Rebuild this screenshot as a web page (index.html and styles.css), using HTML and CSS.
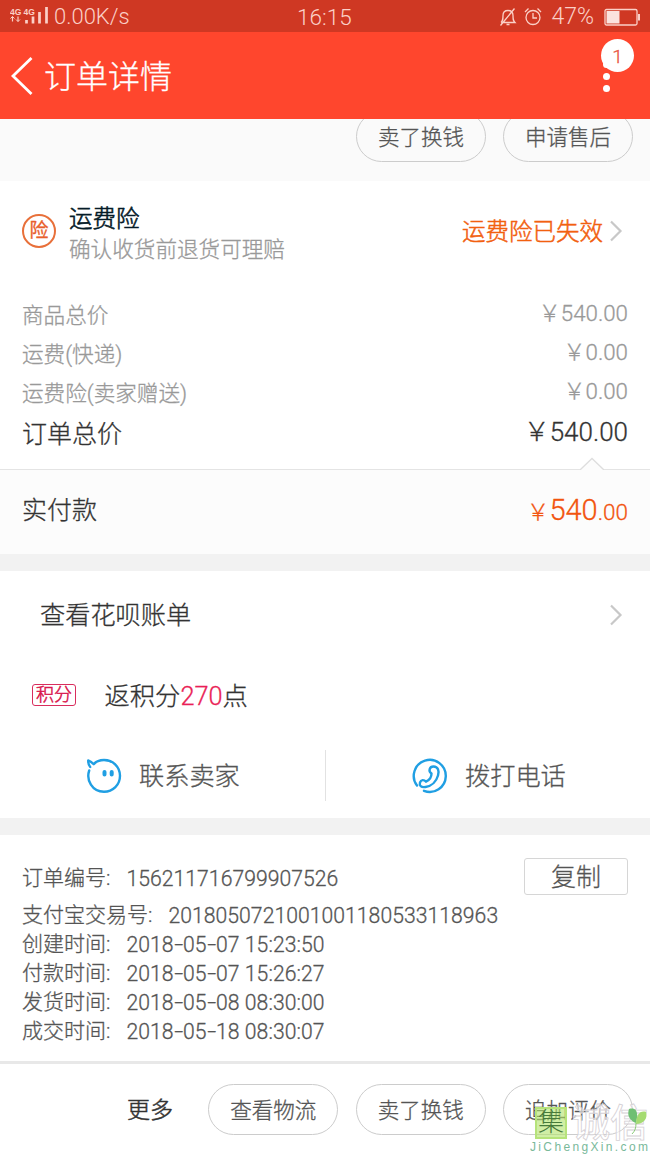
FILE: index.html
```html
<!DOCTYPE html>
<html lang="zh-CN">
<head>
<meta charset="utf-8">
<title>订单详情</title>
<link rel="stylesheet" href="styles.css">
</head>
<body>
<div class="screen">
  <div class="status">
    <svg class="signal" width="40" height="20" viewBox="0 0 40 20">
      <text x="0" y="7.500" class="net">4G</text><text x="13.500" y="7.500" class="net">4G</text>
      <path d="M2.500 9.500v5M8 9.500v5" stroke-width="1.200"/>
      <path d="M.5 11.500l2-2 2 2M6 12.500l2 2 2-2" stroke-width="1"/>
      <path d="M16.500 13v3.500M23 9.500v7M29.500 5v11.500M36.500 0v16.500" stroke-width="2.700"/>
    </svg>
    <span class="speed">0.00K/s</span>
    <span class="clock">16:15</span>
    <div class="status-right">
      <svg width="18" height="20" viewBox="0 0 18 20" class="line"><path d="M2 15.500h14c-2-2-2-3-2-7 0-3-2-5-5-5s-5 2-5 5c0 4 0 5-2 7M7.500 17.500h3M15.500 1.500L1.500 18.500"/></svg>
      <svg width="18" height="20" viewBox="0 0 18 20" class="line"><circle cx="9" cy="10.500" r="7"/><path d="M9 6v5h4M1 5l3.500-3.500M17 5l-3.500-3.500"/></svg>
      <span class="pct">47%</span>
      <svg class="battery" width="37" height="18" viewBox="0 0 37 18"><rect x="1" y="1.500" width="32" height="15.500" rx="1.500" class="line"/><rect x="2.500" y="3" width="13" height="12.500" fill="#fbe3de"/><path d="M35 6v6.500" stroke="#fbd0c7" stroke-width="2"/></svg>
    </div>
  </div>

  <div class="header">
    <svg class="back" width="22" height="40" viewBox="0 0 22 40"><path d="M20.500 2L2 20 20.500 38" fill="none" stroke="#fff" stroke-width="2.800"/></svg>
    <h1>订单详情</h1>
    <div class="menu"><i></i><i></i><i></i><b class="badge">1</b></div>
  </div>

  <div class="goods-actions">
    <span class="pill">卖了换钱</span>
    <span class="pill">申请售后</span>
  </div>

  <div class="insurance">
    <span class="ins-icon">险</span>
    <div class="ins-text"><div class="ins-title">运费险</div><div class="ins-sub">确认收货前退货可理赔</div></div>
    <span class="ins-state">运费险已失效</span>
    <svg class="chev" width="14" height="22" viewBox="0 0 14 22"><path d="M2 1.500L11.500 11 2 20.500"/></svg>
  </div>

  <div class="prices">
    <div class="row"><span>商品总价</span><span>￥540.00</span></div>
    <div class="row"><span>运费(快递)</span><span>￥0.00</span></div>
    <div class="row"><span>运费险(卖家赠送)</span><span>￥0.00</span></div>
    <div class="row total"><span>订单总价</span><span>￥540.00</span></div>
  </div>

  <div class="paid">
    <svg class="notch" width="24" height="13" viewBox="0 0 24 13"><path d="M0 13L12 1.500 24 13" fill="#fcfcfc" stroke="#dedede" stroke-width="1.300"/></svg>
    <span>实付款</span>
    <span class="amount"><small>￥</small>540<small>.00</small></span>
  </div>

  <div class="band"></div>

  <div class="bill">
    <span>查看花呗账单</span>
    <svg class="chev" width="14" height="22" viewBox="0 0 14 22"><path d="M2 1.500L11.500 11 2 20.500"/></svg>
  </div>
  <div class="points"><span class="tag">积分</span><span class="points-text">返积分<em>270</em>点</span></div>
  <div class="contacts">
    <div class="contact">
      <svg width="36" height="36" viewBox="0 0 36 36" class="blue"><path d="M3.200 12.500C0 22 6 33.800 18 33.800c9 0 16-7 16-16S27 2 18 2c-4.500 0-8 1.500-10.300 4.200C6 4.500 4 3 2.200 2.500 2.200 5 2.700 7.500 4.200 9"/><path d="M18.500 14v2.500M25.700 14v2.500" class="eyes"/></svg>
      <span>联系卖家</span>
    </div>
    <div class="contact">
      <svg width="36" height="36" viewBox="0 0 36 36" class="blue"><path d="M5 27.500A16 16 0 1 1 12 32.800"/><path d="M19.500 15.500C16 13 17.500 8.500 21.500 8.500c4.500 0 6 4.500 4.500 9C24.500 23 20 28 13.500 29c-4.500.7-6.500-1.500-5.500-4.500 1-3 4-3 6-.8 3-1.400 5.500-4.700 5.500-8.200z"/></svg>
      <span>拨打电话</span>
    </div>
  </div>

  <div class="band"></div>

  <div class="order">
    <div class="meta first"><span>订单编号:</span><span class="val">156211716799907526</span></div>
    <button class="copy">复制</button>
    <div class="meta"><span>支付宝交易号:</span><span class="val">2018050721001001180533118963</span></div>
    <div class="meta"><span>创建时间:</span><span class="val">2018<i>-</i>05<i>-</i>07 15:23:50</span></div>
    <div class="meta"><span>付款时间:</span><span class="val">2018<i>-</i>05<i>-</i>07 15:26:27</span></div>
    <div class="meta"><span>发货时间:</span><span class="val">2018<i>-</i>05<i>-</i>08 08:30:00</span></div>
    <div class="meta"><span>成交时间:</span><span class="val">2018<i>-</i>05<i>-</i>18 08:30:07</span></div>
  </div>

  <div class="footer">
    <span class="more">更多</span>
    <span class="pill">查看物流</span>
    <span class="pill">卖了换钱</span>
    <span class="pill">追加评价</span>
  </div>

  <div class="watermark">
    <div class="wm-top">
      <span class="wm-box">集</span><span class="wm-name">诚信</span>
      <svg class="leaf" width="20" height="28" viewBox="0 0 20 28"><path d="M1 2c7-2 10 3 7 14C1 13-1 8 1 2z" fill="#6fbf73"/><path d="M8 17C8 8 12 3 18 5c2 6-2 12-10 12z" fill="#a5db72"/><path d="M8 16c0 5-1 8-4 11" fill="none" stroke="#8acb78"/></svg>
    </div>
    <div class="wm-url">JiChengXin.com</div>
  </div>
</div>
</body>
</html>
```

FILE: styles.css
```css
* { box-sizing: border-box; }
body { margin: 0; background: #fff; }
.screen {
  position: relative;
  width: 650px;
  height: 1155px;
  overflow: hidden;
  display: flex;
  flex-direction: column;
  font-family: Roboto, "Noto Sans CJK SC", sans-serif;
  font-weight: 300;
  color: #333;
  white-space: nowrap;
  -webkit-text-stroke: .3px currentColor;
}
.screen > div { flex-shrink: 0; }

.status {
  height: 32px;
  background: #cf3823;
  color: #fbd0c7;
  display: grid;
  grid-template-columns: 44px 243px 78px 1fr;
  align-items: center;
  padding: 2px 9px 0 10px;
  font-size: 22.5px;
  line-height: 30px;
  -webkit-text-stroke-width: 0;
}
.signal { fill: none; stroke: #fbd0c7; }
.net { font: bold 8.5px "Liberation Sans", sans-serif; fill: #fbd0c7; stroke: none; }
.speed { font-size: 22px; }
.status-right { display: flex; align-items: center; justify-content: flex-end; gap: 7px; }
.pct { margin: 0 3px 0 2px; font-size: 23px; }
.line { fill: none; stroke: #fbd0c7; stroke-width: 1.3; }

.header {
  height: 87px;
  background: #ff462d;
  display: flex;
  align-items: center;
  padding: 0 39px 0 11px;
  color: #fff;
}
.header h1 { margin: 3px auto 0 11px; font-size: 32px; font-weight: 300; line-height: 44px; }
.menu { position: relative; width: 10px; margin-top: 1px; display: flex; flex-direction: column; align-items: center; gap: 5px; }
.menu i { width: 7px; height: 7px; border-radius: 50%; background: #fff; }
.badge {
  position: absolute;
  left: 0;
  top: -22px;
  width: 33px;
  height: 33px;
  border-radius: 50%;
  background: #fff;
  color: #e9503c;
  font-weight: 300;
  font-size: 19px;
  line-height: 35px;
  text-align: center;
}

.pill {
  width: 130px;
  height: 51px;
  border: 1px solid #ccc;
  border-radius: 26px;
  font-size: 21.5px;
  line-height: 51px;
  text-align: center;
  color: #555;
}
.goods-actions {
  height: 62px;
  background: #fafafa;
  display: flex;
  justify-content: flex-end;
  align-items: flex-end;
  gap: 17px;
  padding: 0 17px 19px;
  overflow: hidden;
}

.insurance { height: 114px; padding: 0 27px 14px 22px; display: flex; align-items: center; }
.ins-icon {
  width: 34px;
  height: 34px;
  border: 2px solid #e8703a;
  border-radius: 50%;
  color: #e8602c;
  font-size: 19px;
  font-weight: 400;
  line-height: 30px;
  text-align: center;
}
.ins-text { margin: 5px auto 0 13px; }
.ins-title { font-size: 23.5px; line-height: 32px; color: #051b28; -webkit-text-stroke-width: .6px; }
.ins-sub { font-size: 21.6px; line-height: 30px; color: #999; }
.ins-state { margin-top: 2px; font-size: 23.5px; color: #f2600f; line-height: 34px; -webkit-text-stroke-width: .5px; }
.chev { fill: none; stroke: #c8c8c8; stroke-width: 2.2; }
.insurance .chev { margin-left: 6px; }

.prices { height: 174px; padding: 0 22px; }
.row {
  display: flex;
  justify-content: space-between;
  height: 39px;
  line-height: 41px;
  font-size: 21.6px;
  color: #999;
}
.row span:last-child { font-size: 22.3px; line-height: 36px; }
.row.total { font-size: 25px; line-height: 45px; color: #333; }
.row.total span:last-child { font-size: 26px; line-height: 40px; }

.paid {
  position: relative;
  height: 85px;
  background: #fcfcfc;
  border-top: 1px solid #e4e4e4;
  padding: 0 22px 2px;
  display: flex;
  align-items: center;
  justify-content: space-between;
  font-size: 25px;
  line-height: 36px;
}
.notch { position: absolute; left: 580px; top: -13px; }
.amount { font-size: 29px; color: #f2540f; }
.amount small { font-size: 22.5px; }

.band { height: 17px; background: #f2f2f2; }

.bill { height: 87px; padding: 0 27px 0 40px; display: flex; align-items: center; justify-content: space-between; font-size: 25.2px; line-height: 36px; }
.bill span { margin-top: 2px; }
.points { height: 75px; padding: 0 32px 2px; display: flex; align-items: center; gap: 28.5px; font-size: 25.3px; line-height: 36px; }
.points-text { margin-top: 4px; }
.tag {
  width: 44px;
  height: 22px;
  border: 1px solid #d92d5d;
  border-radius: 3px;
  color: #d9184e;
  font-size: 18px;
  line-height: 19px;
  text-align: center;
  -webkit-text-stroke-width: .5px;
}
.points em { font-style: normal; color: #ea1f57; }
.contacts { height: 85px; display: flex; }
.contact {
  width: 325px;
  height: 51px;
  margin-top: 17px;
  padding-left: 86px;
  display: flex;
  align-items: center;
  gap: 17px;
  font-size: 25.2px;
  line-height: 36px;
  color: #555;
}
.contact span { margin-top: 3px; }
.contact + .contact { border-left: 1px solid #e2e2e2; }
.blue { fill: none; stroke: #209fe3; stroke-width: 2.4; stroke-linecap: round; stroke-linejoin: round; }
.eyes { stroke-width: 4; }

.order { position: relative; height: 226px; padding: 27px 22px 0; font-size: 21px; color: #555; }
.meta { display: flex; gap: 16px; height: 29px; line-height: 31px; }
.meta.first { height: 38px; line-height: 33px; }
.val { font-size: 21.15px; letter-spacing: .05px; }
.meta i { display: inline-block; font-style: normal; width: 9.5px; text-align: center; transform: scaleX(1.5); }
.copy {
  position: absolute;
  right: 22px;
  top: 23px;
  width: 104px;
  height: 37px;
  border: 1px solid #d6d6d6;
  border-radius: 3px;
  padding: 2px 0 0;
  background: #fff;
  color: #555;
  font: 300 25px/33px Roboto, "Noto Sans CJK SC", sans-serif;
}

.footer {
  height: 94px;
  border-top: 3px solid #e8e8e8;
  padding: 0 17px 0 127px;
  display: flex;
  align-items: center;
  gap: 17.5px;
}
.more { width: 64px; margin-top: 2px; font-size: 23px; line-height: 36px; -webkit-text-stroke-width: .5px; }

.watermark { position: absolute; left: 530px; top: 1106px; width: 120px; -webkit-text-stroke-width: 0; }
.wm-top { display: flex; height: 34px; padding-left: 5px; align-items: center; position: relative; }
.wm-box {
  width: 32px;
  height: 32px;
  background: rgba(177, 226, 105, .6);
  border: 2px solid #b6e37a;
  color: #477a3b;
  font-size: 26px;
  line-height: 26px;
  text-align: center;
}
.wm-name {
  margin-left: 5px;
  font-size: 38px;
  line-height: 34px;
  font-weight: 500;
  color: rgba(255, 255, 255, .6);
  -webkit-text-stroke: .8px #d5d0d5;
}
.leaf { position: absolute; left: 98px; top: 1px; }
.wm-url { font: 12px/14px "Liberation Sans", sans-serif; letter-spacing: 2.35px; color: #79b99a; }
```
